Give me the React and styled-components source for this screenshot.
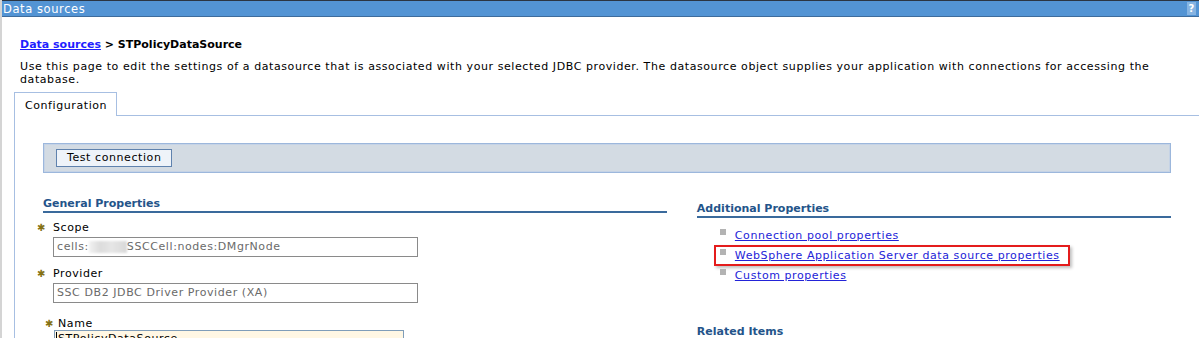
import React from "react";
import styled, { createGlobalStyle } from "styled-components";

const Global = createGlobalStyle`
  html, body { margin: 0; padding: 0; background: #fff; }
  body {
    font-family: "DejaVu Sans", Verdana, sans-serif;
    font-size: 11px;
    color: #000;
    letter-spacing: 0.58px;
  }
`;

const Page = styled.div`
  width: 1199px;
  height: 338px;
  overflow: hidden;
  box-sizing: border-box;
  border-left: 2px solid #d4d4d4;
`;

const TitleBar = styled.div`
  height: 17px;
  box-sizing: border-box;
  border-top: 1px solid #2b3542;
  border-bottom: 1px solid #3e6c9c;
  background: #5394d4;
  color: #fff;
  font-size: 11.5px;
  line-height: 14px;
  padding-left: 1px;
  display: flex;
  justify-content: space-between;
  align-items: center;
`;

const Help = styled.span`
  width: 9px;
  height: 13px;
  margin-right: 3px;
  background: #86b4e2;
  color: #fff;
  font-weight: bold;
  font-size: 10px;
  line-height: 13px;
  letter-spacing: 0;
  text-align: center;
`;

const Body = styled.div`
  padding: 0 0 0 12px;
`;

const Header = styled.div`
  padding: 21px 40px 0 6px;
`;

const Crumb = styled.div`
  font-weight: bold;
  letter-spacing: 0;
  line-height: 14px;
`;

const CrumbLink = styled.a`
  color: #1f1fff;
  text-decoration: underline;
`;

const Desc = styled.p`
  margin: 8px 0 0;
  line-height: 13px;
`;

const TabRow = styled.div`
  display: flex;
  margin-top: 6px;
`;

const Tab = styled.div`
  width: 103px;
  height: 24px;
  box-sizing: border-box;
  border: 1px solid #a7bfe2;
  border-bottom: none;
  padding: 6px 0 0 10px;
  line-height: 13px;
`;

const TabFill = styled.div`
  flex: 1;
  border-bottom: 1px solid #a7bfe2;
`;

const Panel = styled.div`
  border-left: 1px solid #a7bfe2;
  padding: 27px 28px 0 28px;
  height: 260px;
`;

const ButtonBar = styled.div`
  height: 30px;
  box-sizing: border-box;
  background: #d3dbe3;
  border: 1px solid #9cb7dc;
  box-shadow: inset 0 0 0 1px #c5d3e6;
  padding: 5px 12px;
`;

const Button = styled.button`
  font-family: inherit;
  font-size: 11px;
  letter-spacing: 0.58px;
  height: 18px;
  padding: 0 10px;
  background: #eef3f9;
  border: 1px solid #5f82ae;
  color: #000;
  line-height: 14px;
`;

const Columns = styled.div`
  display: flex;
  gap: 30px;
  margin-top: 24px;
`;

const Col = styled.div`
  width: ${(p) => p.$w}px;
  padding-top: ${(p) => p.$top || 0}px;
`;

const Heading = styled.div`
  font-weight: bold;
  letter-spacing: 0;
  color: #24548a;
  line-height: 13px;
  padding-bottom: 1px;
  border-bottom: 2px solid #3a6a9c;
  margin-top: ${(p) => p.$mt || 0}px;
`;

const Field = styled.div`
  margin-top: ${(p) => p.$mt}px;
  padding-left: ${(p) => 10 + (p.$indent || 0)}px;
`;

const Label = styled.div`
  display: flex;
  align-items: center;
  line-height: 13px;
  margin-left: ${(p) => -16 + (p.$shift || 0)}px;
`;

const Star = styled.span`
  color: #857214;
  font-size: 10px;
  width: ${(p) => p.$w || 16}px;
  font-weight: bold;
  letter-spacing: 0;
`;

const Input = styled.div`
  margin-top: ${(p) => (p.$tight ? 0 : 3)}px;
  width: ${(p) => p.$w}px;
  height: ${(p) => (p.$editable ? 22 : 20)}px;
  box-sizing: border-box;
  border: 1px solid ${(p) => (p.$editable ? "#7f9db9" : "#8a8a8a")};
  background: ${(p) => (p.$editable ? "#fff7e4" : "#fff")};
  color: ${(p) => (p.$editable ? "#000" : "#6a6a6a")};
  padding: ${(p) => (p.$editable ? "1px 0 0 1px" : "0 0 0 3px")};
  line-height: ${(p) => (p.$editable ? "14px" : "18px")};
  white-space: nowrap;
  overflow: hidden;
  display: flex;
  align-items: ${(p) => (p.$editable ? "flex-start" : "center")};
`;

const Caret = styled.span`
  width: 1px;
  height: 13px;
  background: #000;
  margin-right: 1px;
`;

const Blur = styled.span`
  display: inline-block;
  width: 38px;
  height: 12px;
  background: linear-gradient(90deg, #f2f2f2, #dcdcdc 30%, #e6e6e6 60%, #d8d8d8);
  filter: blur(1px);
`;

const List = styled.ul`
  list-style: none;
  margin: 7px 0 0;
  padding: 0 0 0 23px;
`;

const Item = styled.li`
  display: flex;
  align-items: center;
  height: 20px;
  position: relative;
`;

const Bullet = styled.span`
  width: 6px;
  height: 6px;
  background: #b3b3b3;
  margin-right: 9px;
  align-self: flex-start;
  margin-top: 4px;
`;

const Link = styled.a`
  color: #2323d8;
  text-decoration: underline;
  line-height: 13px;
`;

const Highlight = styled.span`
  position: absolute;
  left: -6px;
  top: 0px;
  width: 356px;
  height: 21px;
  box-sizing: border-box;
  border: 2px solid #e41c1c;
  box-shadow: 2px 2px 3px rgba(0, 0, 0, 0.25);
`;

export default function App() {
  return (
    <>
      <Global />
      <Page>
        <TitleBar>
          <span>Data sources</span>
          <Help>?</Help>
        </TitleBar>
        <Body>
          <Header>
            <Crumb>
              <CrumbLink>Data sources</CrumbLink> &gt; STPolicyDataSource
            </Crumb>
            <Desc>
              Use this page to edit the settings of a datasource that is associated with your selected JDBC
              provider. The datasource object supplies your application with connections for accessing the
              database.
            </Desc>
          </Header>
          <TabRow>
            <Tab>Configuration</Tab>
            <TabFill />
          </TabRow>
          <Panel>
            <ButtonBar>
              <Button>Test connection</Button>
            </ButtonBar>
            <Columns>
              <Col $w={625}>
                <Heading>General Properties</Heading>
                <Field $mt={8}>
                  <Label><Star>✱</Star>Scope</Label>
                  <Input $w={365}>cells:<Blur />SSCCell:nodes:DMgrNode</Input>
                </Field>
                <Field $mt={10}>
                  <Label><Star>✱</Star>Provider</Label>
                  <Input $w={365}>SSC DB2 JDBC Driver Provider (XA)</Input>
                </Field>
                <Field $mt={14} $indent={1}>
                  <Label $shift={7}><Star $w={13}>✱</Star>Name</Label>
                  <Input $w={350} $editable $tight><Caret />STPolicyDataSource</Input>
                </Field>
              </Col>
              <Col $w={475} $top={5}>
                <Heading>Additional Properties</Heading>
                <List>
                  <Item><Bullet /><Link>Connection pool properties</Link></Item>
                  <Item>
                    <Highlight />
                    <Bullet /><Link>WebSphere Application Server data source properties</Link>
                  </Item>
                  <Item><Bullet /><Link>Custom properties</Link></Item>
                </List>
                <Heading $mt={40}>Related Items</Heading>
              </Col>
            </Columns>
          </Panel>
        </Body>
      </Page>
    </>
  );
}
